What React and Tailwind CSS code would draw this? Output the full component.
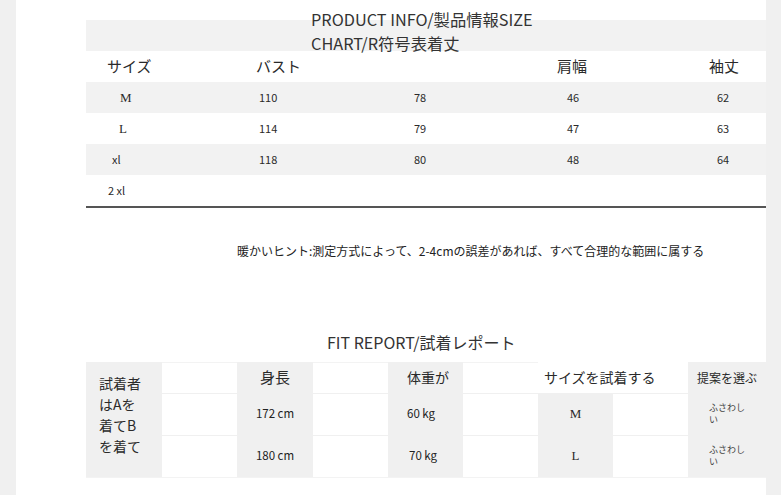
import React from "react";

const SIZE_ROWS = [
  { size: "M", serif: true, pl: "pl-[34px]", values: ["110", "78", "46", "62"], gray: true },
  { size: "L", serif: true, pl: "pl-[33px]", values: ["114", "79", "47", "63"], gray: false },
  { size: "xl", serif: false, pl: "pl-[26px]", values: ["118", "80", "48", "64"], gray: true },
  { size: "2 xl", serif: false, pl: "pl-[22px]", values: ["", "", "", ""], gray: false },
];

const VALUE_PADS = ["pl-[9px]", "pl-[9px]", "pl-[17px]", "pl-[17px]"];

const FIT_ROWS = [
  { height: "172 cm", weight: "60 kg", wpl: "pl-[19px]", size: "M" },
  { height: "180 cm", weight: "70 kg", wpl: "pl-[21px]", size: "L" },
];

export default function App() {
  return (
    <div className="min-h-[495px] bg-[#f0f0f0] pl-[16px] font-['Noto_Sans_CJK_JP',sans-serif] text-[#2a2a2a]">
      <div className="flow-root min-h-[495px] w-[750px] bg-white pt-[20px]">
        {/* SIZE CHART */}
        <div className="ml-[70px] w-[680px]">
          <div className="flow-root h-[31px] bg-[#f2f2f2]">
            <div className="-mt-[13px] ml-[225px] whitespace-nowrap text-[16.3px] leading-[24px] text-[#333]">
              PRODUCT INFO/製品情報SIZE
              <br />
              CHART/R符号表着丈
            </div>
          </div>

          <div className="grid h-[31px] grid-cols-[164px_155px_145px_150px_66px] items-center text-[15px]">
            <div className="pl-[21px]">サイズ</div>
            <div className="pl-[6px]">バスト</div>
            <div></div>
            <div className="pl-[7px]">肩幅</div>
            <div className="pl-[9px]">袖丈</div>
          </div>

          <div className="border-b-2 border-[#555]">
            {SIZE_ROWS.map((row) => (
              <div
                key={row.size}
                className={`grid h-[31px] grid-cols-[164px_155px_145px_150px_66px] items-center text-[11px] ${
                  row.gray ? "bg-[#f2f2f2]" : "bg-white"
                }`}
              >
                <div
                  className={`${row.pl} ${
                    row.serif ? "font-['Liberation_Serif',serif] text-[13px]" : ""
                  }`}
                >
                  {row.size}
                </div>
                {row.values.map((v, i) => (
                  <div key={i} className={VALUE_PADS[i]}>
                    {v}
                  </div>
                ))}
              </div>
            ))}
          </div>
        </div>

        <div className="ml-[221px] mt-[35px] whitespace-nowrap text-[12px] leading-[16px] text-[#222]">
          暖かいヒント:測定方式によって、2-4cmの誤差があれば、すべて合理的な範囲に属する
        </div>

        {/* FIT REPORT */}
        <div className="ml-[311px] mt-[73px] whitespace-nowrap text-[16px] leading-[20px] text-[#333]">
          FIT REPORT/試着レポート
        </div>

        <div className="ml-[70px] mt-[10px] grid w-[680px] grid-cols-[76px_75px_76px_75px_75px_75px_75px_75px_78px] grid-rows-[31px_42px_42px] border-b border-[#f3f3f3]">
          <div className="row-span-3 bg-[#f0f0f0] pl-[13px] pt-[11px] text-[14px] leading-[21px]">
            試着者
            <br />
            はAを
            <br />
            着てB
            <br />
            を着て
          </div>
          <div className="border-t border-[#f3f3f3] bg-white"></div>
          <div className="flex items-center justify-center bg-[#f0f0f0] text-[15px]">身長</div>
          <div className="border-t border-[#f3f3f3] bg-white"></div>
          <div className="flex items-center bg-[#f0f0f0] pl-[19px] text-[14px]">体重が</div>
          <div className="border-t border-[#f3f3f3] bg-white"></div>
          <div className="col-span-2 flex items-center bg-white pl-[6px] text-[14px]">
            サイズを試着する
          </div>
          <div className="flex items-center bg-[#f0f0f0] pl-[9px] text-[12px]">提案を選ぶ</div>

          {FIT_ROWS.map((row) => (
            <React.Fragment key={row.height}>
              <div className="border-t border-[#f0f0f0] bg-white"></div>
              <div className="flex items-center justify-center bg-[#f0f0f0] text-[11.5px] text-[#222]">
                {row.height}
              </div>
              <div className="border-t border-[#f0f0f0] bg-white"></div>
              <div className={`flex items-center bg-[#f0f0f0] text-[11.5px] text-[#222] ${row.wpl}`}>
                {row.weight}
              </div>
              <div className="border-t border-[#f0f0f0] bg-white"></div>
              <div className="flex items-center justify-center bg-[#f0f0f0] font-['Liberation_Serif',serif] text-[13px]">
                {row.size}
              </div>
              <div className="border-t border-[#f0f0f0] bg-white"></div>
              <div className="flex items-center bg-[#f0f0f0] pl-[21px]">
                <div className="w-[38px] text-[9px] leading-[12px] text-[#444]">ふさわしい</div>
              </div>
            </React.Fragment>
          ))}
        </div>
      </div>
    </div>
  );
}
